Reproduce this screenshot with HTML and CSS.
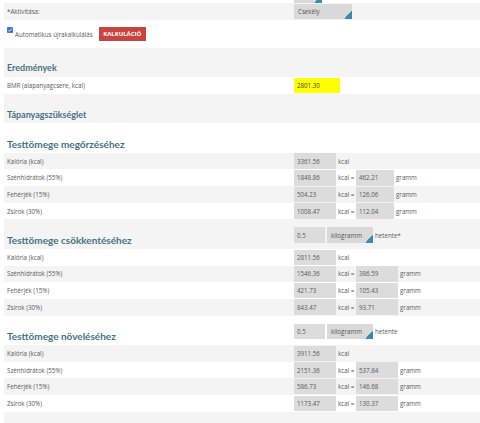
FILE: index.html
```html
<!DOCTYPE html>
<html lang="hu">
<head>
<meta charset="utf-8">
<title>Kalkulátor</title>
<link rel="stylesheet" href="styles.css">
</head>
<body>
<div class="form">
  <div class="row row--data">
    <div class="label"></div>
    <div class="field"><span class="select select--mini"></span></div>
  </div>
  <div class="row row--data">
    <div class="label">*Aktivitása:</div>
    <div class="field"><span class="select select--act">Csekély</span></div>
  </div>
  <div class="row-auto">
    <label class="check">
      <input class="check-input" type="checkbox" checked>
      <svg class="check-icon" viewBox="0 0 12 12" width="6" height="6" aria-hidden="true">
        <rect x="0.5" y="0.5" width="11" height="11" rx="1.5" fill="#2b6fd4" stroke="#1d56b0"/>
        <path d="M2.6 6.2 L5 8.5 L9.4 3.4" fill="none" stroke="#fff" stroke-width="1.8"/>
      </svg>
    </label>
    <span class="auto-label">Automatikus újrakalkulálás</span>
    <span class="btn">KALKULÁCIÓ</span>
  </div>
  <div class="row row--head">
    <h2 class="head">Eredmények</h2>
    <div class="field"></div>
  </div>
  <div class="row row--bmr">
    <div class="label">BMR (alapanyagcsere, kcal)</div>
    <div class="field"><span class="box box--bmr">2801.30</span></div>
  </div>
  <div class="row row--head">
    <h2 class="head">Tápanyagszükséglet</h2>
    <div class="field"></div>
  </div>

  <div class="row row--head">
    <h3 class="head head--sub">Testtömege megőrzéséhez</h3>
    <div class="field"></div>
  </div>
  <div class="row row--data">
    <div class="label">Kalória (kcal)</div>
    <div class="field"><span class="box">3361.56</span><span class="unit">kcal</span></div>
  </div>
  <div class="row row--data">
    <div class="label">Szénhidrátok (55%)</div>
    <div class="field"><span class="box">1848.86</span><span class="unit">kcal =</span><span class="box box--g1">462.21</span><span class="unit-g">gramm</span></div>
  </div>
  <div class="row row--data">
    <div class="label">Fehérjék (15%)</div>
    <div class="field"><span class="box">504.23</span><span class="unit">kcal =</span><span class="box box--g1">126.06</span><span class="unit-g">gramm</span></div>
  </div>
  <div class="row row--data">
    <div class="label">Zsírok (30%)</div>
    <div class="field"><span class="box">1008.47</span><span class="unit">kcal =</span><span class="box box--g1">112.04</span><span class="unit-g">gramm</span></div>
  </div>

  <div class="row row--head">
    <h3 class="head head--sub">Testtömege csökkentéséhez</h3>
    <div class="field field--head"><span class="box box--qty">0.5</span><span class="select select--kg">kilogramm</span><span class="per">hetente<span class="req">*</span></span></div>
  </div>
  <div class="row row--data">
    <div class="label">Kalória (kcal)</div>
    <div class="field"><span class="box">2811.56</span><span class="unit">kcal</span></div>
  </div>
  <div class="row row--data">
    <div class="label">Szénhidrátok (55%)</div>
    <div class="field"><span class="box">1546.36</span><span class="unit">kcal =</span><span class="box box--g2">386.59</span><span class="unit-g">gramm</span></div>
  </div>
  <div class="row row--data">
    <div class="label">Fehérjék (15%)</div>
    <div class="field"><span class="box">421.73</span><span class="unit">kcal =</span><span class="box box--g2">105.43</span><span class="unit-g">gramm</span></div>
  </div>
  <div class="row row--data">
    <div class="label">Zsírok (30%)</div>
    <div class="field"><span class="box">843.47</span><span class="unit">kcal =</span><span class="box box--g2">93.71</span><span class="unit-g">gramm</span></div>
  </div>

  <div class="row row--head">
    <h3 class="head head--sub">Testtömege növeléséhez</h3>
    <div class="field field--head"><span class="box box--qty">0.5</span><span class="select select--kg">kilogramm</span><span class="per">hetente</span></div>
  </div>
  <div class="row row--data">
    <div class="label">Kalória (kcal)</div>
    <div class="field"><span class="box">3911.56</span><span class="unit">kcal</span></div>
  </div>
  <div class="row row--data">
    <div class="label">Szénhidrátok (55%)</div>
    <div class="field"><span class="box">2151.36</span><span class="unit">kcal =</span><span class="box box--g2">537.84</span><span class="unit-g">gramm</span></div>
  </div>
  <div class="row row--data">
    <div class="label">Fehérjék (15%)</div>
    <div class="field"><span class="box">586.73</span><span class="unit">kcal =</span><span class="box box--g2">146.68</span><span class="unit-g">gramm</span></div>
  </div>
  <div class="row row--data">
    <div class="label">Zsírok (30%)</div>
    <div class="field"><span class="box">1173.47</span><span class="unit">kcal =</span><span class="box box--g2">130.37</span><span class="unit-g">gramm</span></div>
  </div>
  <div class="row row--tail"></div>
</div>
</body>
</html>
```
FILE: styles.css
```css
html, body {
  margin: 0;
  padding: 0;
  background: #fff;
  overflow: hidden;
}
body {
  font-family: "Open Sans", "DejaVu Sans", sans-serif;
  font-size: 6.2px;
  color: #5a5a5a;
}
.form {
  margin: -13.67px 0 0 4px;
}
.form > :nth-child(even) {
  background: #f4f4f4;
}
.form > :nth-child(odd) {
  background: #fff;
}
.row {
  display: grid;
  grid-template-columns: 290px 1fr;
  align-items: center;
}
.row--data {
  height: 16.67px;
}
.row--bmr {
  height: 16.67px;
}
.row--head {
  height: 29.5px;
  align-items: start;
}
.row--tail {
  height: 20px;
}
.label {
  padding-left: 3px;
  white-space: nowrap;
}
.field {
  display: flex;
  align-items: center;
  height: 100%;
}
.field--head {
  height: auto;
  align-self: end;
  margin-bottom: 6px;
}
.head {
  margin: 0;
  padding: 14.8px 0 0 3px;
  font-family: Lato, "Open Sans", sans-serif;
  font-weight: 700;
  font-size: 9px;
  line-height: 12px;
  color: #477283;
  white-space: nowrap;
}
.head--sub {
  font-size: 10px;
}
.box {
  box-sizing: border-box;
  display: flex;
  align-items: center;
  width: 42px;
  height: 15.5px;
  padding-left: 3px;
  background: #dcdcdc;
  color: #5a5a5a;
}
.box--g1 {
  width: 38px;
}
.box--g2 {
  width: 42px;
}
.box--bmr {
  width: 46px;
  background: #ffff00;
  color: #444;
}
.box--qty {
  width: 31px;
}
.unit {
  box-sizing: border-box;
  width: 20px;
  padding-left: 2px;
  white-space: nowrap;
}
.unit-g {
  padding-left: 2px;
}
.select {
  position: relative;
  box-sizing: border-box;
  display: flex;
  align-items: center;
  height: 15.5px;
  padding-left: 4px;
  background: #d9d9d9;
  color: #555;
}
.select::after {
  content: "";
  position: absolute;
  right: 0;
  bottom: 0;
  width: 8px;
  height: 9px;
  background: linear-gradient(to bottom right, transparent 50%, #3a8bb3 52%);
}
.select--mini {
  width: 28px;
  align-self: end;
  height: 15px;
  margin-bottom: 0.3px;
}
.select--act {
  width: 58px;
}
.select--kg {
  width: 46px;
  margin-left: 2px;
}
.per {
  padding-left: 2px;
}
.req {
  color: #c0392b;
}
.row-auto {
  display: flex;
  align-items: center;
  box-sizing: border-box;
  height: 28px;
  padding: 7px 0 6.5px 3px;
}
.check {
  position: relative;
  align-self: flex-start;
  display: block;
  width: 6px;
  height: 6px;
  margin-top: 0.3px;
}
.check-input {
  position: absolute;
  inset: 0;
  width: 6px;
  height: 6px;
  margin: 0;
  opacity: 0;
}
.check-icon {
  display: block;
}
.auto-label {
  margin-left: 2px;
  margin-top: 1px;
}
.btn {
  display: flex;
  align-items: center;
  justify-content: center;
  width: 47px;
  height: 14px;
  margin-left: 6px;
  background: #c8443f;
  color: #fff;
  font-weight: 700;
  font-size: 6px;
}
```
